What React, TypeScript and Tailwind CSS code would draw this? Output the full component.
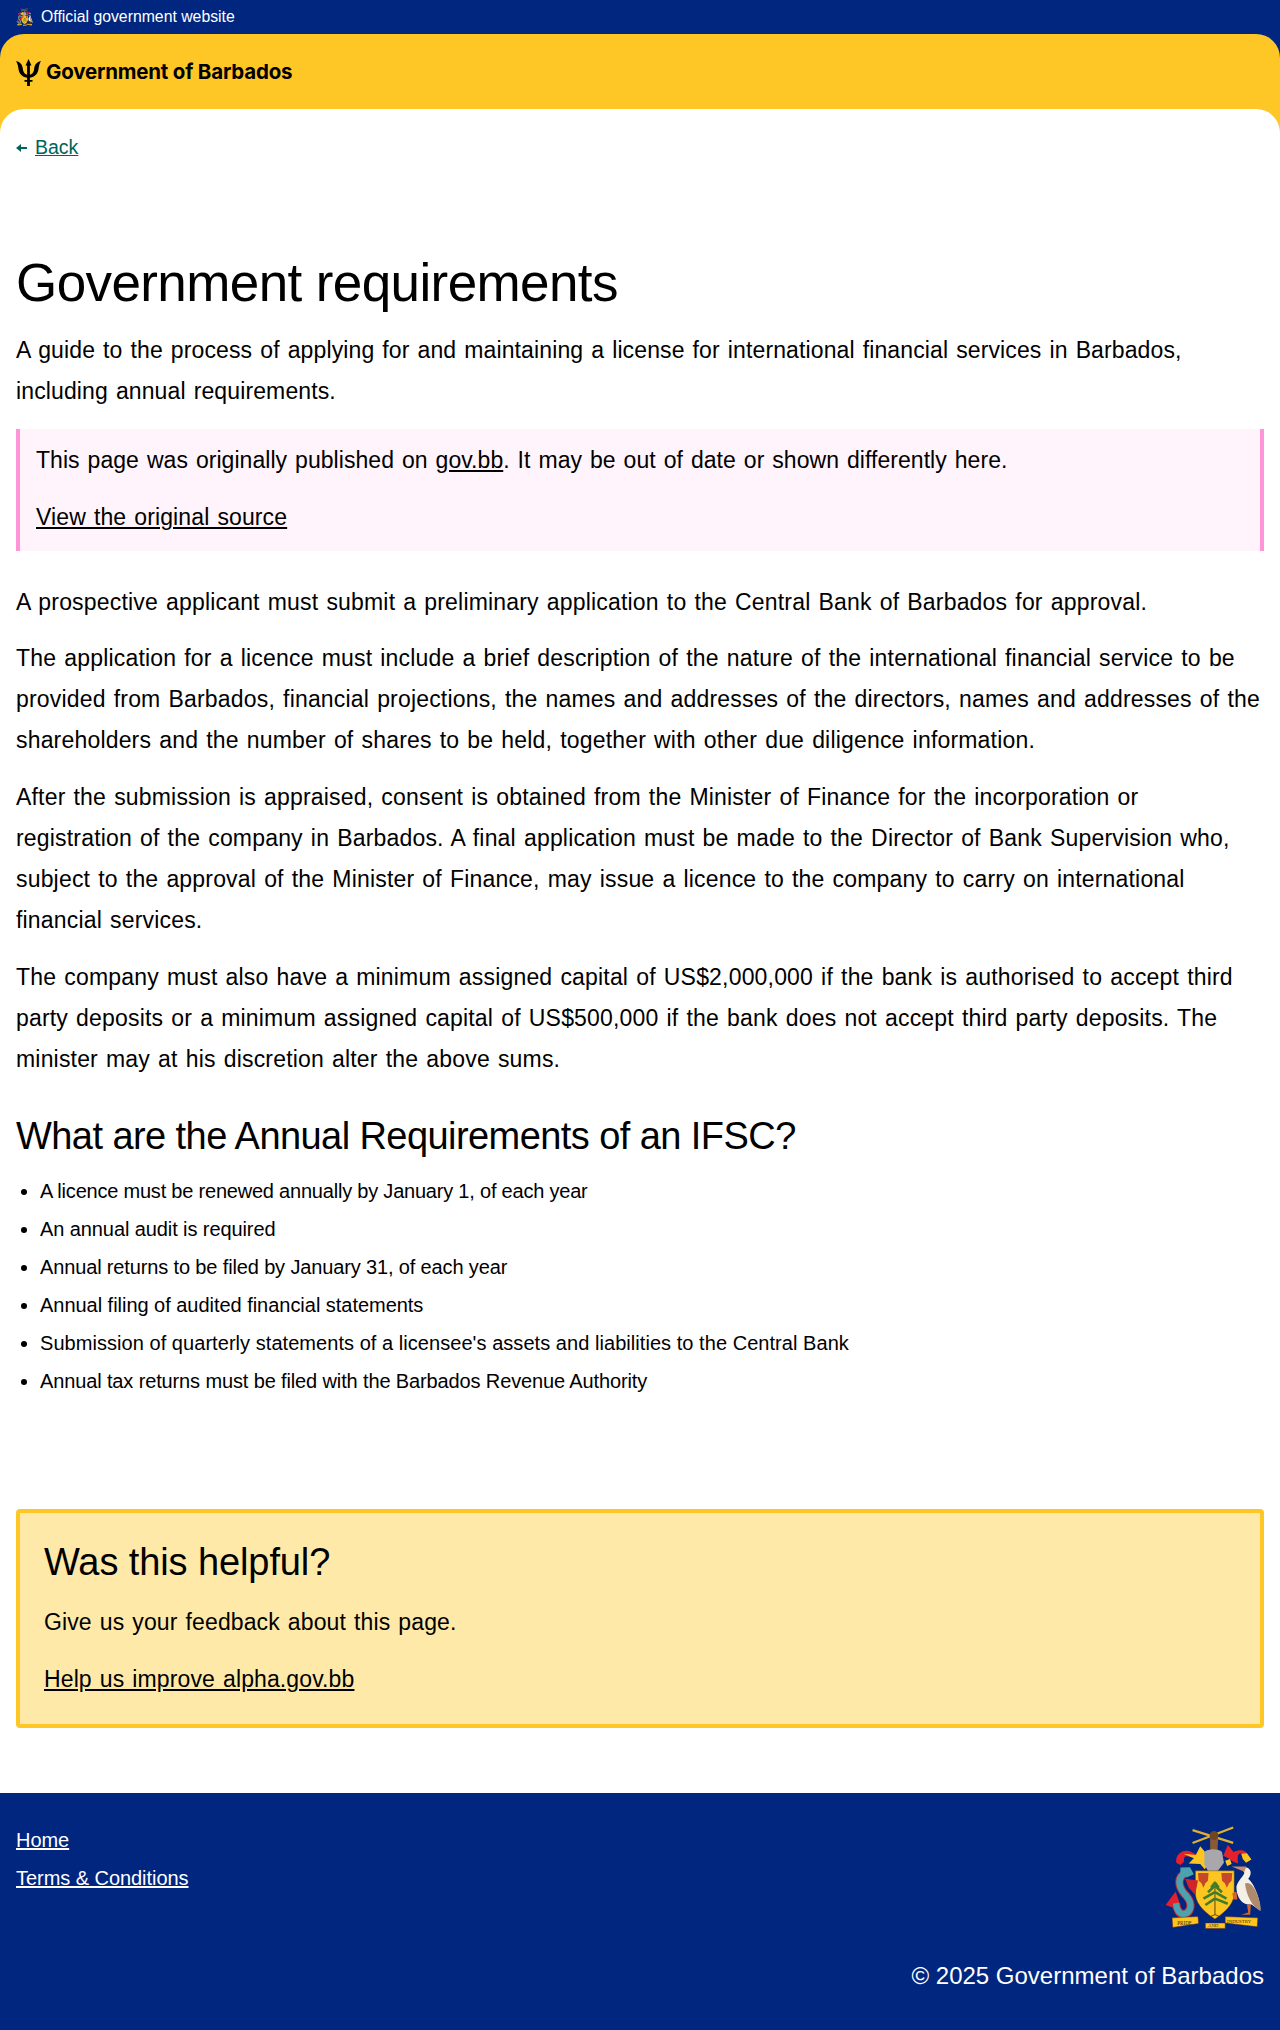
const font = "font-['Liberation_Sans',Arial,sans-serif]"
const body = "text-[23px] leading-[41px] tracking-[0.12px] [word-spacing:1.5px]"

function Crest({ className }: { className: string }) {
  return (
    <svg viewBox="100 72 310 328" className={className}>
      <path d="M188 128 L315 80 M188 88 L315 128" stroke="#e0b030" strokeWidth="7" />
      <path d="M243 112 L268 112 L266 152 L243 152 Z" fill="#8a5a30" />
      <circle cx="255" cy="105" r="14" fill="#6f4522" />
      <path d="M137 190 C133 162 160 146 182 155 L202 166 L180 171 C166 166 158 172 162 186 L150 197 Z" fill="#e3202b" />
      <path d="M160 162 L198 166 L212 138 L226 155 L236 195 L226 210 L212 194 L176 192 L192 176 Z" fill="#fdc51f" />
      <path d="M284 168 L298 134 L316 156 C336 146 360 150 358 166 L336 160 C326 165 330 180 330 192 L314 186 L300 176 Z" fill="#e3202b" />
      <path d="M340 162 L358 160 L372 180 L355 190 L345 178 Z M290 184 L305 178 L310 194 L296 200 Z" fill="#fdc51f" />
      <path d="M225 156 C235 145 270 145 280 156 L286 190 L268 214 L240 222 L225 196 Z" fill="#a8a8ac" />
      <path d="M197 215 L318 215 L318 290 C315 325 280 350 258 366 C235 350 200 325 197 290 Z" fill="#fdc51f" stroke="#6b4a12" strokeWidth="1.5" />
      <path d="M205 222 L238 222 L236 246 L228 254 L222 268 L216 254 L207 246 Z M278 222 L312 222 L310 246 L302 254 L295 268 L289 254 L280 246 Z" fill="#c8472a" />
      <path d="M258 248 L258 352 M258 352 L244 358 M258 352 L272 358" stroke="#5a3a1a" strokeWidth="3" fill="none" />
      <path d="M258 262 L236 282 M258 262 L280 282 M258 282 L222 302 M258 282 L294 302 M258 302 L228 322 M258 302 L298 318 M258 252 L246 268 M258 252 L270 268" stroke="#3f7d2c" strokeWidth="8" fill="none" />
      <path d="M104 322 L135 280 L150 322 L132 332 Z" fill="#e3202b" />
      <path d="M160 225 C135 245 150 275 170 295 C190 320 182 345 162 350 C146 352 138 335 136 316" fill="none" stroke="#c8242c" strokeWidth="26" />
      <path d="M160 225 C135 245 150 275 170 295 C190 320 182 345 162 350 C146 352 138 335 136 316" fill="none" stroke="#4aa3ae" strokeWidth="20" />
      <path d="M150 205 L180 204 L192 226 L170 236 L150 226 Z" fill="#4aa3ae" />
      <path d="M165 240 L205 245 L196 290 L176 268 Z" fill="#d0242c" />
      <path d="M340 205 C368 198 378 220 362 240 C385 260 400 310 400 340 L372 320 C345 325 325 300 325 265 C330 245 345 235 350 222 Z" fill="#f4f0e6" />
      <path d="M352 255 C380 240 405 320 400 340 C375 330 355 290 352 255 Z" fill="#b08a6c" />
      <path d="M310 202 L356 202 L350 218 Z" fill="#c88a6a" />
      <path d="M358 320 L362 345 L340 352 L368 352 L370 320 Z M312 285 L325 280 L328 305 L316 305 Z" fill="#d9622b" />
      <path d="M124 362 L205 358 L207 380 L126 392 Z M228 378 L290 378 L290 395 L228 395 Z M290 358 L392 362 L390 390 L290 378 Z" fill="#fdc51f" stroke="#6b1a14" strokeWidth="1.5" />
      <text x="140" y="383" fontSize="16" fontFamily="Liberation Serif" fill="#3a2a10">PRIDE</text>
      <text x="236" y="392" fontSize="15" fontFamily="Liberation Serif" fill="#3a2a10">AND</text>
      <text x="296" y="378" fontSize="15" fontFamily="Liberation Serif" fill="#3a2a10">INDUSTRY</text>
    </svg>
  )
}

function Trident() {
  return (
    <svg viewBox="0 0 25 27" className="h-[27px] w-[25px]" fill="#000">
      <path d="M12.5 0 L15.5 6.5 L13.9 6.5 L13.9 15.8 C16.5 15.2 17.8 13 18.2 9.5 C18.6 6 20.5 3 25 2 C23.6 4.5 23 6.5 22.6 9.5 C22 14.5 19 18 13.9 18.8 L13.9 21 L16.5 21 L16.5 22.8 L13.9 22.8 L13.9 27 L11.1 27 L11.1 22.8 L8.5 22.8 L8.5 21 L11.1 21 L11.1 18.8 C6 18 3 14.5 2.4 9.5 C2 6.5 1.4 4.5 0 2 C4.5 3 6.4 6 6.8 9.5 C7.2 13 8.5 15.2 11.1 15.8 L11.1 6.5 L9.5 6.5 Z" />
    </svg>
  )
}

export default function App() {
  return (
    <div className={`${font} min-h-[2030px] bg-[#00267f] text-black`}>
      <div className="flex h-[34px] items-center gap-[8px] px-4 text-[15.8px] text-white">
        <Crest className="h-[18px] w-[17px]" />
        <span>Official government website</span>
      </div>

      <header className="flex h-[99px] items-start rounded-t-[24px] bg-[#ffc726] px-4 pt-[23px]">
        <div className="flex items-center gap-[5px]">
          <Trident />
          <span className="font-['Inter',sans-serif] text-[20.5px] font-bold tracking-[-0.2px]">Government of Barbados</span>
        </div>
      </header>

      <main className="-mt-6 rounded-t-[24px] bg-white px-4 pb-[65px]">
        <div className="flex h-[77px] items-center gap-[8px] text-[#00645a]">
          <svg viewBox="0 0 11 8" className="h-[8px] w-[11px]" fill="currentColor">
            <path d="M0 4 L5 0 L5 3 L11 3 L11 5 L5 5 L5 8 Z" />
          </svg>
          <a className="text-[19.5px] underline">Back</a>
        </div>

        <h1 className="mt-[65px] text-[53px] leading-[64px] tracking-[-0.6px]">Government requirements</h1>

        <p className={`mt-[15px] ${body}`}>
          A guide to the process of applying for and maintaining a license for international financial services in Barbados, including annual requirements.
        </p>

        <div className={`mt-[17px] h-[122px] border-x-4 border-[#ff94d9] bg-[#fff4fb] px-4 pt-[11px] ${body}`}>
          <p className="tracking-[0.05px]">
            This page was originally published on <a className="underline">gov.bb</a>. It may be out of date or shown differently here.
          </p>
          <p className="mt-[16px]">
            <a className="underline">View the original source</a>
          </p>
        </div>

        <div className={`mt-[31px] flex flex-col gap-4 ${body} tracking-[0.18px]`}>
          <p>A prospective applicant must submit a preliminary application to the Central Bank of Barbados for approval.</p>
          <p className="-mt-[1px]">The application for a licence must include a brief description of the nature of the international financial service to be provided from Barbados, financial projections, the names and addresses of the directors, names and addresses of the shareholders and the number of shares to be held, together with other due diligence information.</p>
          <p>After the submission is appraised, consent is obtained from the Minister of Finance for the incorporation or<br />registration of the company in Barbados. A final application must be made to the Director of Bank Supervision who,<br />subject to the approval of the Minister of Finance, may issue a licence to the company to carry on international<br />financial services.</p>
          <p>The company must also have a minimum assigned capital of US$2,000,000 if the bank is authorised to accept third party deposits or a minimum assigned capital of US$500,000 if the bank does not accept third party deposits. The minister may at his discretion alter the above sums.</p>
        </div>

        <h2 className="mt-[32px] text-[38px] leading-[48px] tracking-[-0.57px]">What are the Annual Requirements of an IFSC?</h2>

        <ul className="mt-[16px] flex list-disc flex-col gap-[8px] pl-[24px] text-[20px] leading-[30px]">
          <li className="tracking-[-0.21px]">A licence must be renewed annually by January 1, of each year</li>
          <li className="tracking-[-0.09px]">An annual audit is required</li>
          <li className="tracking-[-0.14px]">Annual returns to be filed by January 31, of each year</li>
          <li className="tracking-[-0.03px]">Annual filing of audited financial statements</li>
          <li className="tracking-[0.05px]">Submission of quarterly statements of a licensee's assets and liabilities to the Central Bank</li>
          <li className="tracking-[-0.13px]">Annual tax returns must be filed with the Barbados Revenue Authority</li>
        </ul>

        <section className="mt-[113px] h-[219px] rounded-[4px] border-4 border-[#ffc726] bg-[#fee9a8] px-[24px] pt-[25px]">
          <h2 className="text-[38px] leading-[48px] tracking-[-0.1px]">Was this helpful?</h2>
          <p className={`mt-[16px] ${body}`}>Give us your feedback about this page.</p>
          <p className={`mt-[16px] ${body}`}>
            <a className="underline">Help us improve alpha.gov.bb</a>
          </p>
        </section>
      </main>

      <footer className="flex h-[237px] flex-col justify-between px-4 pb-[38px] pt-[32px] text-white">
        <div className="flex items-start justify-between">
          <div className="flex flex-col gap-[8px] text-[20px] leading-[30px] tracking-[-0.05px]">
            <a className="underline">Home</a>
            <a className="underline">Terms &amp; Conditions</a>
          </div>
          <Crest className="h-[105px] w-[100px]" />
        </div>
        <p className="text-right text-[24px] leading-[32px]">© 2025 Government of Barbados</p>
      </footer>
    </div>
  )
}
